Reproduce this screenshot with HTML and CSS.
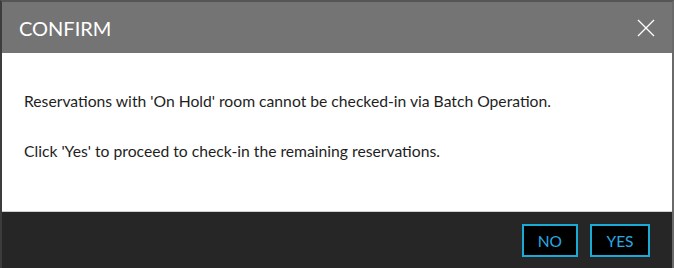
FILE: index.html
```html
<!DOCTYPE html>
<html>
<head>
<meta charset="utf-8">
<link rel="stylesheet" href="styles.css">
</head>
<body>
<div class="dialog">
  <div class="header">
    <span class="title">CONFIRM</span>
    <button class="close" aria-label="Close">
      <svg width="18" height="18" viewBox="0 0 18 18"><path d="M1 1 L17 17 M17 1 L1 17" stroke="#fff" stroke-width="1.3" fill="none"/></svg>
    </button>
  </div>
  <div class="content">
    <p>Reservations with 'On Hold' room cannot be checked-in via Batch Operation.</p>
    <p>Click 'Yes' to proceed to check-in the remaining reservations.</p>
  </div>
  <div class="footer">
    <button class="btn">NO</button>
    <button class="btn">YES</button>
  </div>
</div>
</body>
</html>
```
FILE: styles.css
```css
html, body {
  margin: 0;
  padding: 0;
  background: #3a3a3a;
}
body {
  font-family: Lato, "Open Sans", sans-serif;
  width: 674px;
  height: 268px;
  overflow: hidden;
}
.dialog {
  display: flex;
  flex-direction: column;
  height: 268px;
  box-sizing: border-box;
  border-top: 2px solid #555;
  border-left: 2px solid #3c3c3c;
  border-right: 2px solid #6a6a6a;
  background: #747474;
}
.header {
  height: 51px;
  display: flex;
  align-items: center;
  justify-content: space-between;
  padding: 0 17px 0 17px;
  background: #747474;
}
.title {
  color: #fff;
  font-size: 20px;
  margin-top: 1px;
}
.close {
  background: none;
  border: 0;
  padding: 0;
  width: 18px;
  height: 18px;
  display: flex;
}
.content {
  height: 158px;
  background: #fff;
  padding: 33px 17px 0 22px;
  box-sizing: border-box;
  color: #1e1e1e;
  font-size: 15.7px;
}
.content p {
  margin: 0 0 20px 0;
  line-height: 30px;
}
.footer {
  flex: 1;
  background: #262626;
  border-top: 1px solid #cfcfcf;
  display: flex;
  justify-content: flex-end;
  align-items: flex-start;
  gap: 12px;
  padding: 12px 22px 0 0;
}
.btn {
  background: #000;
  border: 2px solid #1ba9d6;
  color: #2aa8e0;
  font-family: Lato, "Open Sans", sans-serif;
  font-size: 15.5px;
  height: 33px;
  min-width: 56px;
  padding: 0 14px;
}
.btn + .btn {
  min-width: 60px;
}
```
